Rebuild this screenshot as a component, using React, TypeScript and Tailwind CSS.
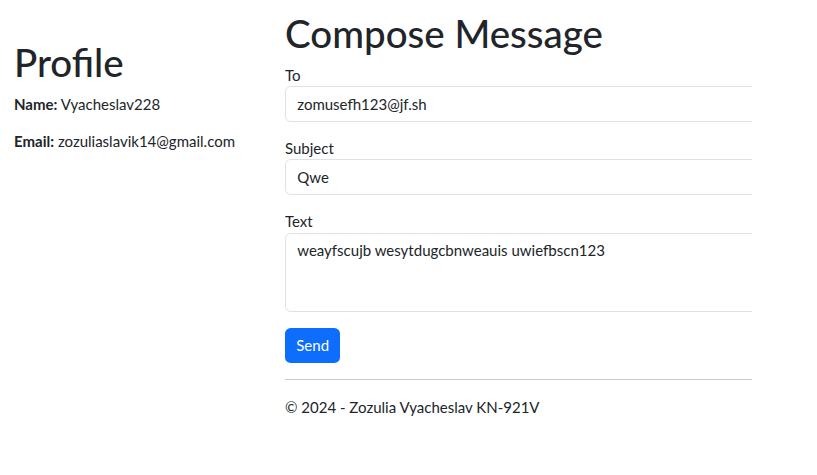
import React from "react";

const font = { fontFamily: 'Lato, "Noto Sans", sans-serif' };

const Field = ({ label, value }: { label: string; value: string }) => (
  <div className="mb-[15px]">
    <label className="block leading-[22.5px]">{label}</label>
    <input
      readOnly
      value={value}
      className="block w-full h-[35.75px] px-[11.25px] border border-[#dee2e6] rounded-[5.6px] bg-white text-[#212529] text-[15px] leading-[22.5px] outline-none"
    />
  </div>
);

export default function App() {
  return (
    <div
      className="min-h-[475px] bg-white text-[#212529] text-[15px] leading-[22.5px]"
      style={font}
    >
      <div className="flex w-[752px] overflow-hidden">
        <div className="w-[285px] shrink-0 pl-[14px] pt-[40px]">
          <h1 className="text-[38.5px] leading-[45px] font-medium mb-[7.5px]">Profile</h1>
          <p className="mb-[15px]">
            <strong className="font-bold">Name:</strong> Vyacheslav228
          </p>
          <p className="mb-[15px]">
            <strong className="font-bold">Email:</strong> zozuliaslavik14@gmail.com
          </p>
        </div>
        <div className="w-[467px] shrink-0 overflow-hidden pt-[11px]">
          <div className="w-[520px]">
            <h2 className="text-[38.5px] leading-[45px] font-medium mb-[7.5px]">Compose Message</h2>
            <Field label="To" value="zomusefh123@jf.sh" />
            <Field label="Subject" value="Qwe" />
            <div className="mb-[16px]">
              <label className="block leading-[22.5px]">Text</label>
              <textarea
                readOnly
                value="weayfscujb wesytdugcbnweauis uwiefbscn123"
                className="block w-full h-[79px] px-[11.25px] py-[5.6px] border border-[#dee2e6] rounded-[5.6px] text-[15px] leading-[22.5px] resize-none outline-none"
              />
            </div>
            <button className="h-[35.5px] px-[11.25px] rounded-[5.6px] bg-[#0d6efd] text-white text-[15px] leading-[22.5px]">
              Send
            </button>
            <hr className="my-[16px] border-t border-[#c9cacb]" />
            <footer className="leading-[22.5px]">© 2024 - Zozulia Vyacheslav KN-921V</footer>
          </div>
        </div>
      </div>
    </div>
  );
}
